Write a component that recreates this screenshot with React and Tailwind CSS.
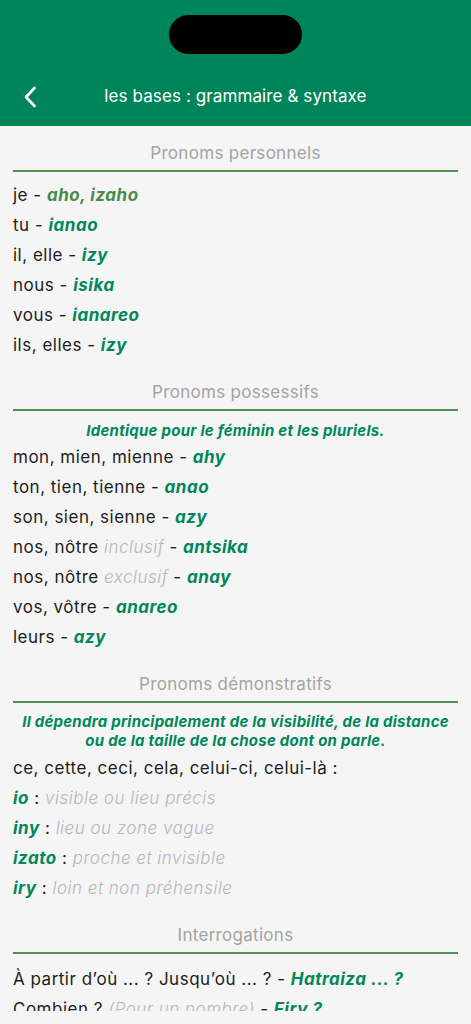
import React from 'react';

const GREEN = 'text-[#00875a]';

const Word = ({ children, olive }) => (
  <span className={`font-bold italic ${olive ? 'text-[#4b8a4b]' : GREEN}`}>{children}</span>
);

const Hint = ({ children }) => (
  <span className="italic font-light text-[#b6b6b6]">{children}</span>
);

const Row = ({ children }) => (
  <div className="h-[30px] flex items-center text-[17px] tracking-[0.5px] text-[#1c1c1c] whitespace-nowrap">{children}</div>
);

const SectionTitle = ({ children, first }) => (
  <div
    className={`${first ? 'pt-[16px]' : 'pt-[20px]'} pb-[6px] border-b-2 border-[#4f8f4f] text-center text-[17px] leading-[22px] tracking-[0.3px] text-[#a3a3a3]`}
  >
    {children}
  </div>
);

const Note = ({ children }) => (
  <p className={`text-center font-bold italic text-[15px] leading-[19px] tracking-[0.25px] ${GREEN}`}>{children}</p>
);

export default function App() {
  return (
    <div
      className="h-[1024px] w-full flex flex-col overflow-hidden bg-[#f5f5f5]"
      style={{ fontFamily: 'Inter, "Noto Sans", sans-serif' }}
    >
      <header className="relative h-[126px] shrink-0 bg-[#00855a]">
        <div className="absolute left-[169px] top-[15px] w-[133px] h-[39px] rounded-full bg-black" />
        <div className="absolute left-0 right-0 top-[75px] h-[44px] flex items-center justify-center">
          <button className="absolute left-[16px] top-[8px] w-[28px] h-[28px] flex items-center justify-center">
            <svg width="14" height="22" viewBox="0 0 14 22" fill="none">
              <path d="M11.5 2 L3 11 L11.5 20" stroke="white" strokeWidth="2.6" strokeLinecap="round" strokeLinejoin="round" />
            </svg>
          </button>
          <h1 className="text-white text-[17px] tracking-[0.1px]">les bases : grammaire &amp; syntaxe</h1>
        </div>
      </header>

      <main className="flex-1 overflow-hidden px-[13px]">
        <SectionTitle first>Pronoms personnels</SectionTitle>
        <div className="mt-[9px]">
          <Row>je -&nbsp;<Word olive>aho, izaho</Word></Row>
          <Row>tu -&nbsp;<Word>ianao</Word></Row>
          <Row>il, elle -&nbsp;<Word>izy</Word></Row>
          <Row>nous -&nbsp;<Word>isika</Word></Row>
          <Row>vous -&nbsp;<Word>ianareo</Word></Row>
          <Row>ils, elles -&nbsp;<Word>izy</Word></Row>
        </div>

        <SectionTitle>Pronoms possessifs</SectionTitle>
        <div className="mt-[10px]">
          <Note>Identique pour le féminin et les pluriels.</Note>
        </div>
        <div className="mt-[3px]">
          <Row>mon, mien, mienne -&nbsp;<Word>ahy</Word></Row>
          <Row>ton, tien, tienne -&nbsp;<Word>anao</Word></Row>
          <Row>son, sien, sienne -&nbsp;<Word>azy</Word></Row>
          <Row>nos, nôtre&nbsp;<Hint>inclusif</Hint>&nbsp;-&nbsp;<Word>antsika</Word></Row>
          <Row>nos, nôtre&nbsp;<Hint>exclusif</Hint>&nbsp;-&nbsp;<Word>anay</Word></Row>
          <Row>vos, vôtre -&nbsp;<Word>anareo</Word></Row>
          <Row>leurs -&nbsp;<Word>azy</Word></Row>
        </div>

        <SectionTitle>Pronoms démonstratifs</SectionTitle>
        <div className="mt-[9px]">
          <Note>
            Il dépendra principalement de la visibilité, de la distance
            <br />
            ou de la taille de la chose dont on parle.
          </Note>
        </div>
        <div className="mt-[4px]">
          <Row>ce, cette, ceci, cela, celui-ci, celui-là :</Row>
          <Row><Word>io</Word>&nbsp;:&nbsp;<Hint>visible ou lieu précis</Hint></Row>
          <Row><Word>iny</Word>&nbsp;:&nbsp;<Hint>lieu ou zone vague</Hint></Row>
          <Row><Word>izato</Word>&nbsp;:&nbsp;<Hint>proche et invisible</Hint></Row>
          <Row><Word>iry</Word>&nbsp;:&nbsp;<Hint>loin et non préhensile</Hint></Row>
        </div>

        <SectionTitle>Interrogations</SectionTitle>
        <div className="mt-[11px]">
          <Row>À partir d’où ... ? Jusqu’où ... ? -&nbsp;<Word>Hatraiza ... ?</Word></Row>
          <Row>Combien ?&nbsp;<Hint>(Pour un nombre)</Hint>&nbsp;-&nbsp;<Word>Firy ?</Word></Row>
        </div>
      </main>
      <div className="h-[13px] shrink-0 bg-[#f5f5f5]" />
    </div>
  );
}
